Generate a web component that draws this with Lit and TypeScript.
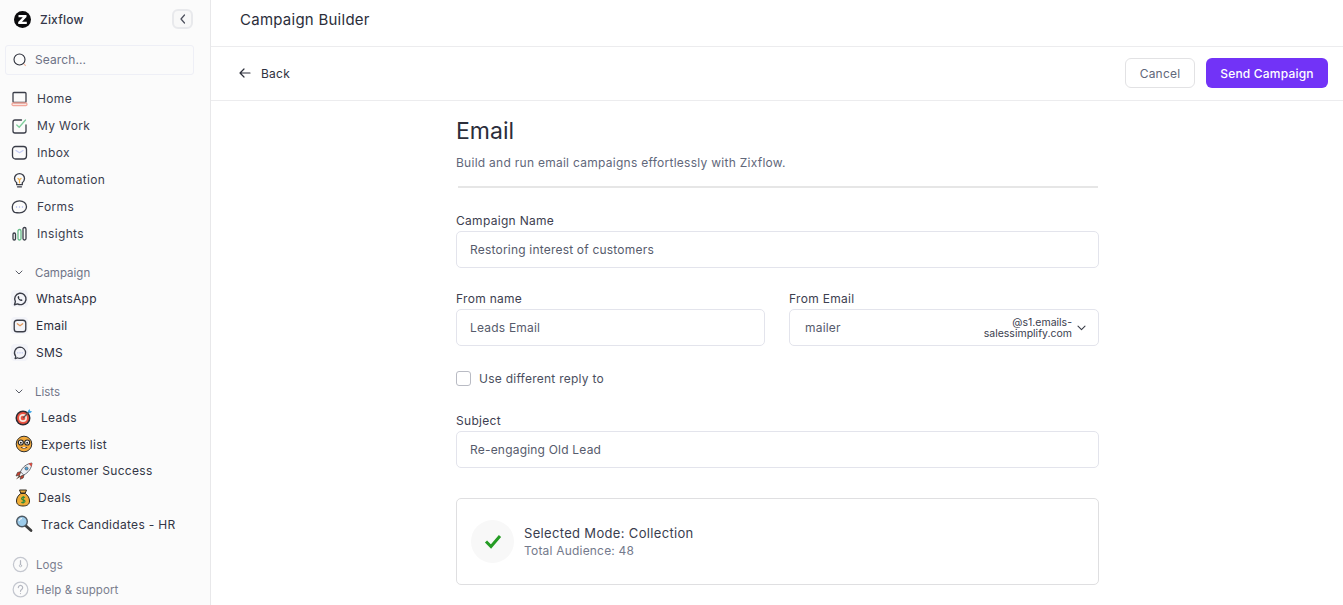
import { LitElement, html, css, svg } from 'lit'
import { customElement } from 'lit/decorators.js'

const icon = (body: unknown, size = 18) =>
  html`<svg width=${size} height=${size} viewBox="0 0 18 18" fill="none" stroke="#3a3d48" stroke-width="1.300" stroke-linecap="round" stroke-linejoin="round">${body}</svg>`

const icons = {
  home: svg`<rect x="3" y="2.500" width="13" height="10" rx="1"/><rect x="2" y="13" width="15" height="2.500" rx="1.200" stroke="#f3a79b"/>`,
  work: svg`<path d="M11.500 3H5A2 2 0 0 0 3 5v9a2 2 0 0 0 2 2h9a2 2 0 0 0 2-2V8"/><path d="M6.800 8l2.400 2.200L15.500 3" stroke="#7fcf9c"/>`,
  inbox: svg`<rect x="2.500" y="2.500" width="14" height="12.500" rx="3"/><path d="M6 6.500l3.500 2.200 3.500-2.200" stroke="#c5cdf5"/>`,
  bulb: svg`<path d="M6.700 11.800C5.300 10.700 4.500 9.500 4.500 7.600a5 5 0 0 1 10 0c0 1.900-.8 3.100-2.200 4.200v1.900H6.700z"/><path d="M7.500 15.800h4"/><path d="M8 7.500l1.500 1.300L11 7.500M9.500 8.800v3" stroke="#f0b04e"/>`,
  forms: svg`<path d="M9.500 2.800c4 0 7 2.500 7 6s-3 6-7 6c-1.500 0-3-.1-4.800-.5-1.500-.5-2.400-3-2.400-5.500 0-3.500 3.200-6 7.200-6z"/><path d="M6.500 9h.01M9.500 9h.01M12.500 9h.01" stroke="#aab4ee" stroke-width="1.400"/>`,
  insights: svg`<rect x="3" y="8" width="2.500" height="7" rx="1.200"/><rect x="8" y="4.500" width="3" height="10.500" rx="1.500" stroke="#66bb88"/><rect x="13" y="2.500" width="3" height="12.500" rx="1.500"/>`,
  whatsapp: svg`<path d="M2.800 15.500l1-3.500A6.400 6.400 0 1 1 6.300 14.500z" stroke-width="1.600"/><path d="M6.800 6c-.7.600-.6 1.700.3 2.900s2.200 2.200 3.300 2.300c.9 0 1.400-.4 1.500-1.100l-1.400-.9-.8.500c-.8-.3-1.400-1-1.900-1.900l.6-.8-.8-1.300z" fill="#2c2f3a" stroke="none"/>`,
  email: svg`<rect x="2.500" y="2.500" width="13" height="13" rx="3.200" stroke-width="1.500"/><path d="M6 6.500l3 2.200 3-2.200" stroke="#e29a5e" stroke-width="1.500"/>`,
  sms: svg`<path d="M9 2.500a6.300 6.300 0 0 1 0 12.600c-1 0-2.100-.2-3-.7l-2.500.9.700-2.500A6.300 6.300 0 0 1 9 2.500z" stroke-width="1.400"/><path d="M6.500 8.800h.01M9 8.800h.01M11.500 8.800h.01" stroke="#aab4ee" stroke-width="1.400"/>`,
  logs: svg`<circle cx="9" cy="9" r="7.500" stroke="#c4c7cf"/><path d="M9 5v4" stroke="#b4b7c0"/><circle cx="9" cy="10.300" r="1.200" stroke="#b4b7c0" stroke-width="0.900"/>`,
  help: svg`<circle cx="9" cy="9" r="7.800" stroke="#c4c7cf"/><path d="M6.700 7a2.300 2.300 0 1 1 3.500 2c-.8.500-1.200.9-1.200 1.900M9 13.300v.01" stroke="#b4b7c0"/>`,
}

const target = svg`<svg width="18" height="18" viewBox="0 0 18 18"><circle cx="8" cy="10" r="7.500" fill="#2b2b33"/><circle cx="8" cy="10" r="6" fill="#e9503f"/><circle cx="8" cy="10" r="4" fill="#f6e6dc"/><circle cx="8" cy="10" r="2.300" fill="#e9503f"/><path d="M8 10L15 3" stroke="#555" stroke-width="1.300"/><path d="M12.500 3.500l2-2.500.7 2 2 .5-2.500 2z" fill="#3fa6e8"/></svg>`
const nerd = svg`<svg width="18" height="18" viewBox="0 0 18 18"><circle cx="9" cy="9" r="7.800" fill="#f2a93b" stroke="#30302f"/><circle cx="5.800" cy="7.500" r="2.500" fill="#fff" stroke="#2a2a2a" stroke-width="1.200"/><circle cx="12.200" cy="7.500" r="2.500" fill="#fff" stroke="#2a2a2a" stroke-width="1.200"/><circle cx="5.800" cy="7.800" r="1" fill="#222"/><circle cx="12.200" cy="7.800" r="1" fill="#222"/><path d="M5.500 12c1.500 2 5.500 2 7 0z" fill="#3a2a20"/><path d="M7.500 12.100h3v1h-3z" fill="#fff"/></svg>`
const rocket = svg`<svg width="18" height="18" viewBox="0 0 18 18"><path d="M6 9.500L2.500 10.500 1 14l3.500-.8z" fill="#c9402f" stroke="#33302e" stroke-width="0.600"/><path d="M9 13l-.8 3-3 1.300.7-3.300z" fill="#c9402f" stroke="#33302e" stroke-width="0.600"/><path d="M5.500 9.800C7.500 5 11.500 1.800 17 1c-.5 5.500-3.500 9.500-8.300 12z" fill="#eef1f6" stroke="#454a54" stroke-width="0.800"/><path d="M13.500 1.500L17 1l-.5 3.800z" fill="#d9483b"/><circle cx="11.500" cy="6.500" r="1.600" fill="#4aa3df" stroke="#444" stroke-width="0.600"/><path d="M4.500 13l-3.500 4.500 4.800-3z" fill="#5a4030"/></svg>`
const bag = svg`<svg width="14" height="18" viewBox="0 0 14 18"><path d="M3.500 1h7l-1.200 3H4.700z" fill="#e9a93a" stroke="#2e2a22"/><path d="M4.800 4.500h4.400C12 6.500 13.500 9 13.500 12c0 3.500-2.500 5-6.500 5S.5 15.500.5 12c0-3 1.500-5.500 4.300-7.500z" fill="#f0ad36" stroke="#2e2a22"/><path d="M9 8.500C8 7.800 5.500 8 5.500 9.500c0 1.800 3.500 1 3.500 2.800 0 1.500-2.500 1.600-3.700.9M7.200 7v7.500" stroke="#2e8a3b" stroke-width="1.100" fill="none"/></svg>`
const lens = svg`<svg width="18" height="18" viewBox="0 0 18 18"><path d="M10.500 10.500l5.500 5" stroke="#3c3c3c" stroke-width="2.800" stroke-linecap="round"/><circle cx="7" cy="6.500" r="5.300" fill="#9ccbea" stroke="#4d5862" stroke-width="1.400"/><path d="M4 6a3 3 0 0 1 3-2.500" stroke="#fff" fill="none"/></svg>`

const chevronDown = html`<svg width="9" height="6" viewBox="0 0 9 6" fill="none" stroke="#3a3d48" stroke-width="1.100" stroke-linecap="round" stroke-linejoin="round"><path d="M1 1.200l3.500 3.500L8 1.200"/></svg>`
const chevronSmall = html`<svg width="8" height="5" viewBox="0 0 8 5" fill="none" stroke="#5a5d68" stroke-width="1" stroke-linecap="round" stroke-linejoin="round"><path d="M1 1l3 3 3-3"/></svg>`

@customElement('app-root')
export class AppRoot extends LitElement {
  static styles = css`
    :host {
      display: flex;
      width: 1343px;
      height: 605px;
      overflow: hidden;
      background: #fff;
      font-family: Inter, 'Liberation Sans', sans-serif;
      font-size: 12px;
      color: #2e3140;
      letter-spacing: 0.25px;
    }
    aside {
      flex: none;
      width: 211px;
      box-sizing: border-box;
      background: #fbfbfb;
      border-right: 1px solid #e8e8ea;
      display: flex;
      flex-direction: column;
    }
    .brand {
      display: flex;
      align-items: center;
      height: 38px;
      padding: 0 17px 0 14px;
      gap: 9px;
      font-size: 12px;
      font-weight: 500;
      color: #34374a;
      letter-spacing: 0.2px;
    }
    .logo {
      width: 17px;
      height: 17px;
      flex: none;
    }
    .collapse {
      margin-left: auto;
      width: 21px;
      height: 20px;
      box-sizing: border-box;
      border: 2px solid #e8e9ec;
      border-radius: 6px;
      display: flex;
      align-items: center;
      justify-content: center;
      background: #f8f8f8;
    }
    .search {
      margin: 7px 16px 0 5px;
      height: 30px;
      box-sizing: border-box;
      border: 1px solid #eeeff6;
      border-radius: 3px;
      display: flex;
      align-items: center;
      gap: 8px;
      padding: 0 0 1px 7px;
      color: #6d7285;
      letter-spacing: 0.1px;
    }
    nav {
      display: flex;
      flex-direction: column;
    }
    .main-nav {
      margin-top: 10px;
    }
    .main-nav .item {
      letter-spacing: 0.35px;
    }
    .item {
      height: 27px;
      display: flex;
      align-items: center;
      gap: 9px;
      padding-left: 10px;
      color: #3a3d4e;
    }
    .item svg {
      flex: none;
    }
    .group {
      height: 25px;
      display: flex;
      align-items: center;
      gap: 12px;
      padding-left: 15px;
      color: #6f7488;
      font-size: 11.500px;
      letter-spacing: 0;
    }
    .campaign {
      margin-top: 13px;
    }
    .lists {
      margin-top: 13px;
    }
    .tile {
      width: 17px;
      height: 17px;
      background: #f3f4f9;
      border-radius: 4px;
      display: flex;
      align-items: center;
      justify-content: center;
      flex: none;
    }
    .camp-item {
      gap: 8px;
      padding-left: 11px;
      color: #2a2d3c;
    }
    .list-item {
      height: 26.750px;
      padding-left: 15px;
      gap: 8px;
      letter-spacing: 0.3px;
      color: #333646;
    }
    .list-item.narrow {
      padding-left: 16px;
      gap: 8px;
    }
    .foot {
      margin-top: auto;
      padding-bottom: 3px;
    }
    .foot .item {
      height: 25px;
      padding-left: 12px;
      gap: 7px;
      color: #7a7e8e;
      font-size: 11.500px;
      letter-spacing: 0.1px;
    }
    main {
      flex: 1;
      min-width: 0;
      display: flex;
      flex-direction: column;
    }
    .title {
      height: 47px;
      box-sizing: border-box;
      border-bottom: 1px solid #ececee;
      padding: 0 29px 7px;
      display: flex;
      align-items: center;
      font-size: 15px;
      color: #2b2e3a;
      letter-spacing: 0.25px;
    }
    .actions {
      height: 54px;
      box-sizing: border-box;
      border-bottom: 1px solid #ececee;
      padding: 0 15px 1px 28px;
      display: flex;
      align-items: center;
      gap: 11px;
    }
    .back {
      display: flex;
      align-items: center;
      gap: 10px;
      margin-right: auto;
    }
    button {
      font: inherit;
      height: 30px;
      border-radius: 6px;
      box-sizing: border-box;
      letter-spacing: 0.2px;
    }
    .cancel {
      width: 70px;
      background: #fff;
      border: 1px solid #e2e2e4;
      color: #61677a;
    }
    .send {
      width: 122px;
      background: #7233f7;
      border: none;
      color: #fff;
      font-weight: 500;
    }
    .form {
      width: 643px;
      margin-left: 245px;
      display: flex;
      flex-direction: column;
    }
    h1 {
      margin: 17px 0 0;
      font-size: 23px;
      font-weight: 400;
      line-height: 27px;
      color: #2b2e3a;
      letter-spacing: 0;
    }
    .sub {
      margin: 10px 0 0;
      color: #61677a;
      line-height: 16px;
      letter-spacing: 0.27px;
    }
    hr {
      margin: 15px 1px 0 2px;
      border: none;
      border-top: 2px solid #e6e6e6;
    }
    .field {
      display: flex;
      flex-direction: column;
      min-width: 0;
    }
    .field label {
      line-height: 16px;
      margin-bottom: 2px;
      color: #3d4050;
      letter-spacing: 0.3px;
    }
    .campaign-name {
      margin-top: 25px;
    }
    .subject {
      margin-top: 26px;
    }
    .input {
      height: 37px;
      box-sizing: border-box;
      border: 1px solid #e3e4ec;
      border-radius: 5px;
      padding: 0 13px;
      display: flex;
      align-items: center;
      color: #565b6c;
      letter-spacing: 0.2px;
    }
    .two {
      display: grid;
      grid-template-columns: 309px 310px;
      gap: 24px;
      margin-top: 23px;
    }
    .mailer {
      padding: 0 12px 0 15px;
      justify-content: space-between;
      gap: 5px;
    }
    .domain {
      margin-left: auto;
      text-align: right;
      font-size: 10.500px;
      line-height: 11px;
      letter-spacing: 0;
      width: 100px;
      color: #3a3d4e;
    }
    .check {
      display: flex;
      align-items: center;
      gap: 8px;
      margin-top: 23px;
      height: 18px;
      color: #4b4f60;
    }
    .box {
      width: 15px;
      height: 15px;
      box-sizing: border-box;
      border: 1px solid #b9bbc4;
      border-radius: 3px;
    }
    .card {
      margin-top: 30px;
      height: 87px;
      box-sizing: border-box;
      border: 1px solid #dfdfe1;
      border-radius: 5px;
      padding: 0 14px;
      display: flex;
      align-items: center;
      gap: 10px;
    }
    .ok {
      width: 43px;
      height: 43px;
      border-radius: 50%;
      background: #f8f8f8;
      display: flex;
      align-items: center;
      justify-content: center;
    }
    .mode {
      font-size: 13px;
      line-height: 17px;
      color: #3a3d4e;
      letter-spacing: 0.33px;
    }
    .aud {
      line-height: 17px;
      color: #747a8c;
      letter-spacing: 0.2px;
    }
  `

  render() {
    const mainNav: [string, unknown][] = [
      ['Home', icons.home],
      ['My Work', icons.work],
      ['Inbox', icons.inbox],
      ['Automation', icons.bulb],
      ['Forms', icons.forms],
      ['Insights', icons.insights],
    ]
    const camps: [string, unknown][] = [
      ['WhatsApp', icons.whatsapp],
      ['Email', icons.email],
      ['SMS', icons.sms],
    ]
    return html`
      <aside>
        <div class="brand">
          <svg class="logo" viewBox="0 0 17 17">
            <circle cx="8.500" cy="8.500" r="8.500" fill="#0b0b0d" />
            <path d="M4.500 4h8v2L8 10.800h4.800V13H4.200v-2l4.600-4.800H4.500z" fill="#fff" />
          </svg>
          Zixflow
          <div class="collapse">
            <svg width="8" height="10" viewBox="0 0 8 10" fill="none" stroke="#4c4f5c" stroke-width="1.200" stroke-linecap="round" stroke-linejoin="round"><path d="M5.500 1L2 5l3.500 4" /></svg>
          </div>
        </div>
        <div class="search">
          <svg width="14" height="14" viewBox="0 0 14 14" fill="none" stroke="#2c2f3a" stroke-width="1.100"><circle cx="6.500" cy="6.500" r="5.500" /><path d="M10.800 10.800l2 2" stroke="#f0b59c" /></svg>
          Search...
        </div>
        <nav class="main-nav">
          ${mainNav.map(([label, i]) => html`<div class="item">${icon(i)}${label}</div>`)}
        </nav>
        <div class="group campaign">${chevronSmall}Campaign</div>
        <nav>
          ${camps.map(
            ([label, i]) =>
              html`<div class="item camp-item"><span class="tile">${icon(i, 16)}</span>${label}</div>`,
          )}
        </nav>
        <div class="group lists">${chevronSmall}Lists</div>
        <nav>
          <div class="item list-item">${target}Leads</div>
          <div class="item list-item">${nerd}Experts list</div>
          <div class="item list-item">${rocket}Customer Success</div>
          <div class="item list-item narrow">${bag}Deals</div>
          <div class="item list-item">${lens}Track Candidates - HR</div>
        </nav>
        <nav class="foot">
          <div class="item">${icon(icons.logs, 17)}Logs</div>
          <div class="item">${icon(icons.help, 17)}Help &amp; support</div>
        </nav>
      </aside>
      <main>
        <div class="title">Campaign Builder</div>
        <div class="actions">
          <div class="back">
            <svg width="12" height="10" viewBox="0 0 12 10" fill="none" stroke="#2c2f3a" stroke-width="1.200" stroke-linecap="round" stroke-linejoin="round"><path d="M11 5H1M5 1L1 5l4 4" /></svg>
            Back
          </div>
          <button class="cancel">Cancel</button>
          <button class="send">Send Campaign</button>
        </div>
        <div class="form">
          <h1>Email</h1>
          <p class="sub">Build and run email campaigns effortlessly with Zixflow.</p>
          <hr />
          <div class="field campaign-name">
            <label>Campaign Name</label>
            <div class="input">Restoring interest of customers</div>
          </div>
          <div class="two">
            <div class="field">
              <label>From name</label>
              <div class="input">Leads Email</div>
            </div>
            <div class="field">
              <label>From Email</label>
              <div class="input mailer">
                mailer
                <span class="domain">@s1.emails-salessimplify.com</span>
                ${chevronDown}
              </div>
            </div>
          </div>
          <div class="check"><span class="box"></span>Use different reply to</div>
          <div class="field subject">
            <label>Subject</label>
            <div class="input">Re-engaging Old Lead</div>
          </div>
          <div class="card">
            <div class="ok">
              <svg width="18" height="15" viewBox="0 0 18 15" fill="none" stroke="#259c24" stroke-width="3" stroke-linejoin="miter"><path d="M2 7.500l5 5 9-10.500" /></svg>
            </div>
            <div>
              <div class="mode">Selected Mode: Collection</div>
              <div class="aud">Total Audience: 48</div>
            </div>
          </div>
        </div>
      </main>
    `
  }
}
